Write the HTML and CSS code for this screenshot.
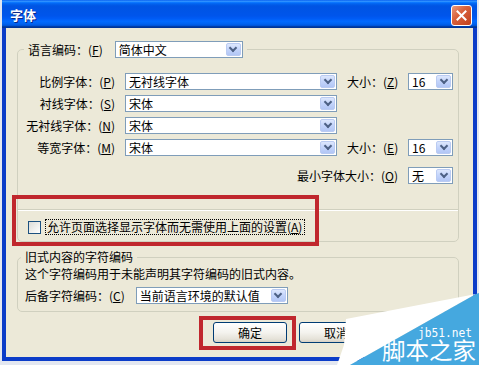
FILE: index.html
```html
<!DOCTYPE html>
<html lang="zh-CN">
<head>
    <meta charset="UTF-8">
    <title>字体</title>
    <link rel="stylesheet" href="styles.css">
</head>
<body>
<div class="window">
    <div class="titlebar">
        <span class="title">字体</span>
        <span class="close">
            <svg width="11" height="11" viewBox="0 0 11 11"><path d="M1.5 1.5 L9.5 9.5 M9.5 1.5 L1.5 9.5" stroke="#fff" stroke-width="2" stroke-linecap="square"/></svg>
        </span>
    </div>
    <div class="frame">

        <fieldset class="group group-fonts">
            <legend class="lang">
                <span>语言编码：(<u>F</u>)</span>
                <div class="combo w-lang"><span class="val">简体中文</span><span class="arrow"></span></div>
            </legend>

            <div class="font-grid">
                <span class="lbl">比例字体：(<u>P</u>)</span>
                <div class="combo"><span class="val">无衬线字体</span><span class="arrow"></span></div>
                <span class="lbl2">大小：(<u>Z</u>)</span>
                <div class="combo"><span class="val">16</span><span class="arrow"></span></div>

                <span class="lbl">衬线字体：(<u>S</u>)</span>
                <div class="combo"><span class="val">宋体</span><span class="arrow"></span></div>

                <span class="lbl">无衬线字体：(<u>N</u>)</span>
                <div class="combo"><span class="val">宋体</span><span class="arrow"></span></div>

                <span class="lbl">等宽字体：(<u>M</u>)</span>
                <div class="combo"><span class="val">宋体</span><span class="arrow"></span></div>
                <span class="lbl2">大小：(<u>E</u>)</span>
                <div class="combo"><span class="val">16</span><span class="arrow"></span></div>
            </div>

            <div class="min-row">
                <span>最小字体大小：(<u>O</u>)</span>
                <div class="combo w-size"><span class="val">无</span><span class="arrow"></span></div>
            </div>

            <div class="sep"></div>

            <div class="check-row">
                <span class="checkbox"></span>
                <span class="focus">允许页面选择显示字体而无需使用上面的设置(<u>A</u>)</span>
            </div>
        </fieldset>

        <fieldset class="group group-enc">
            <legend class="enc-title">旧式内容的字符编码</legend>
            <div class="enc">
                <p>这个字符编码用于未能声明其字符编码的旧式内容。</p>
                <div class="enc-row">
                    <span>后备字符编码：(<u>C</u>)</span>
                    <div class="combo w-enc"><span class="val">当前语言环境的默认值</span><span class="arrow"></span></div>
                </div>
            </div>
        </fieldset>

        <div class="buttons">
            <button type="button" class="btn">确定</button>
            <button type="button" class="btn">取消</button>
        </div>
    </div>
</div>

<div class="mark mark-check"></div>
<div class="mark mark-ok"></div>

<svg class="watermark" width="149" height="80" viewBox="0 0 149 80">
    <polygon points="146,9 16,34 14,60 7,80 20,80" fill="#fff"/>
    <polygon points="146,9 149,8 149,80 20,80" fill="#45A8DF"/>
    <text x="88" y="52" class="wm-url" textLength="54" lengthAdjust="spacingAndGlyphs">jb51.net</text>
    <text x="52" y="74" class="wm-name" textLength="94" lengthAdjust="spacingAndGlyphs">脚本之家</text>
</svg>
</body>
</html>
```

FILE: styles.css
```css
body {
    margin: 0;
    background: #E3E7F0;
    font-family: "Noto Sans CJK SC", sans-serif;
    font-size: 12px;
    color: #000;
}

u {
    text-decoration: underline;
    text-underline-offset: 1px;
}

/* window chrome */
.window {
    margin-left: 2px;
    width: 475px;
}

.titlebar {
    height: 28px;
    display: flex;
    align-items: center;
    justify-content: space-between;
    padding: 0 5px 0 8px;
    background: linear-gradient(to bottom, #0058EE 0%, #3593FF 4%, #288EFF 6%, #127DFF 8%, #036FFC 10%, #0262EE 14%, #0057E5 20%, #0054E3 24%, #0055EB 56%, #005BF5 66%, #026AFE 76%, #0062EF 86%, #0052D6 92%, #0040AB 94%, #003092 100%);
}

.title {
    color: #fff;
    font-weight: bold;
    font-size: 13px;
    text-shadow: 1px 1px 0 #0A2A8A;
}

.close {
    width: 21px;
    height: 21px;
    margin-top: 3px;
    box-sizing: border-box;
    border: 1px solid #fff;
    border-radius: 3px;
    background: linear-gradient(135deg, #E99A7E 0%, #D9623D 40%, #C1401C 100%);
    display: flex;
    align-items: center;
    justify-content: center;
}

.frame {
    height: 329px;
    border: 4px solid #0B3CC8;
    border-top: 0;
    background: #ECE9D8;
    overflow: hidden;
}

/* group boxes */
.group {
    margin: 0 14px 0 11px;
    padding: 0;
    border: 1px solid #D0D0BF;
    border-radius: 5px;
    min-inline-size: 0;
}

.group-fonts {
    margin-top: 13px;
}

.lang {
    display: flex;
    align-items: center;
    gap: 12px;
    margin-left: 6px;
    padding: 0 4px;
}

.font-grid {
    display: grid;
    grid-template-columns: 97px 212px 51px 45px;
    grid-auto-rows: 17px;
    column-gap: 10px;
    row-gap: 5px;
    padding-top: 15px;
    line-height: 17px;
}

.lbl {
    grid-column-start: 1;
    text-align: right;
    white-space: nowrap;
}

.lbl2 {
    text-align: right;
    white-space: nowrap;
}

.min-row {
    display: flex;
    justify-content: flex-end;
    align-items: center;
    gap: 10px;
    margin-top: 11px;
    padding-right: 5px;
    height: 17px;
}

.sep {
    margin-top: 25px;
    border-top: 1px solid #D0D0BF;
    border-bottom: 1px solid #fff;
}

.check-row {
    display: flex;
    align-items: center;
    height: 16px;
    margin-top: 8px;
    margin-bottom: 6px;
    padding-left: 10px;
}

.checkbox {
    width: 13px;
    height: 13px;
    box-sizing: border-box;
    border: 1px solid #1C5180;
    background: linear-gradient(135deg, #DCDCD7 0%, #FFFFFF 100%);
    margin-right: 4px;
}

.focus {
    border: 1px dotted #000;
    padding: 0 2px 0 1px;
    line-height: 14px;
    white-space: nowrap;
}

.group-enc {
    margin-top: 8px;
}

.enc-title {
    margin-left: 3px;
    padding: 0 4px;
    line-height: 14px;
}

.enc {
    padding: 3px 0 7px 7px;
}

.enc p {
    margin: 0;
    line-height: 14px;
}

.enc-row {
    display: flex;
    align-items: center;
    gap: 11px;
    height: 17px;
    margin-top: 6px;
}

/* combo boxes */
.combo {
    display: flex;
    align-items: center;
    height: 17px;
    box-sizing: border-box;
    border: 1px solid #7F9DB9;
    background: #fff;
    line-height: 15px;
}

.w-lang { width: 128px; }
.w-size { width: 45px; }
.w-enc { width: 152px; }

.val {
    flex: 1;
    padding-left: 3px;
    white-space: nowrap;
    overflow: hidden;
}

.arrow {
    width: 15px;
    height: 13px;
    margin-right: 1px;
    box-sizing: border-box;
    border: 1px solid #BACBF2;
    border-radius: 2px;
    background: linear-gradient(to bottom, #DDE7FD 0%, #C3D4FB 50%, #B2C6F5 100%);
    display: flex;
    align-items: center;
    justify-content: center;
}

.arrow::after {
    content: "";
    width: 4px;
    height: 4px;
    border-right: 2px solid #4D6185;
    border-bottom: 2px solid #4D6185;
    transform: translateY(-2px) rotate(45deg);
}

/* buttons */
.buttons {
    display: flex;
    gap: 12px;
    margin-top: 10px;
    padding-left: 207px;
}

.btn {
    width: 74px;
    height: 21px;
    padding: 0;
    font-family: inherit;
    font-size: 12px;
    color: #000;
    border: 1px solid #003C74;
    border-radius: 3px;
    background: linear-gradient(to bottom, #FFFFFF 0%, #F4F3EE 50%, #E5E2D8 85%, #D6D0C5 100%);
}

/* annotation overlays */
.mark {
    position: absolute;
    box-sizing: border-box;
    border: 4px solid #C0272D;
}

.mark-check {
    left: 12px;
    top: 195px;
    width: 307px;
    height: 51px;
}

.mark-ok {
    left: 199px;
    top: 316px;
    width: 97px;
    height: 34px;
}

.watermark {
    position: absolute;
    left: 330px;
    top: 285px;
}

.wm-url {
    fill: #fff;
    font-family: "DejaVu Sans Mono", monospace;
    font-size: 13px;
}

.wm-name {
    fill: #fff;
    font-family: "Noto Sans CJK SC", sans-serif;
    font-size: 23px;
}
```
